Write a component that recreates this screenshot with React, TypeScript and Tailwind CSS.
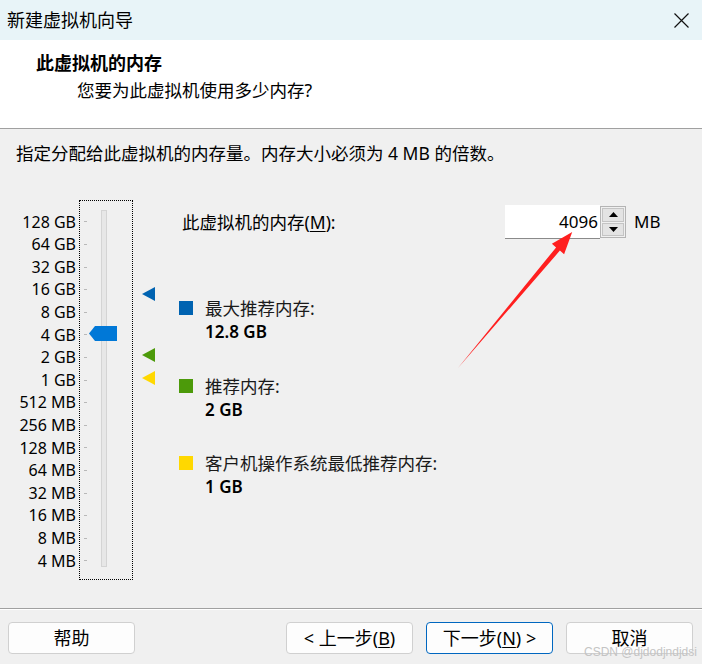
import React from "react";

const SCALE = [
  "128 GB",
  "64 GB",
  "32 GB",
  "16 GB",
  "8 GB",
  "4 GB",
  "2 GB",
  "1 GB",
  "512 MB",
  "256 MB",
  "128 MB",
  "64 MB",
  "32 MB",
  "16 MB",
  "8 MB",
  "4 MB",
];

const MARKERS = [
  { top: "top-[87px]", fill: "#0063b1" },
  { top: "top-[148px]", fill: "#4c9a0a" },
  { top: "top-[171px]", fill: "#ffd800" },
];

const LEGEND = [
  { sq: "bg-[#0063b1]", label: "最大推荐内存:", value: "12.8 GB", mt: "mt-[57px]" },
  { sq: "bg-[#4c9a0a]", label: "推荐内存:", value: "2 GB", mt: "mt-[30px]" },
  { sq: "bg-[#ffd800]", label: "客户机操作系统最低推荐内存:", value: "1 GB", mt: "mt-[29px]" },
];

function Btn({ children, primary }: { children: React.ReactNode; primary?: boolean }) {
  return (
    <div
      className={
        "h-[32px] w-[127px] rounded-[4px] bg-[#fdfdfd] flex items-center justify-center text-[18px] leading-none text-black border " +
        (primary ? "border-[#0067c0]" : "border-[#d0d0d0]")
      }
    >
      {children}
    </div>
  );
}

export default function App() {
  return (
    <div className="relative w-[702px] h-[664px] overflow-hidden bg-[#f0f0f0] flex flex-col font-['Noto_Sans','Noto_Sans_CJK_SC',sans-serif] text-black">
      {/* Title bar */}
      <div className="h-[40px] shrink-0 bg-[#e8f4f8] flex items-center justify-between pl-[7px] pr-[13px]">
        <span className="text-[18px] leading-none">新建虚拟机向导</span>
        <svg width="15" height="15" viewBox="0 0 15 15">
          <path d="M0.5 0.5 L14.5 14.5 M14.5 0.5 L0.5 14.5" stroke="#111" strokeWidth="1.2" />
        </svg>
      </div>

      {/* Header */}
      <div className="h-[89px] shrink-0 bg-white border-b border-[#a0a0a0] pt-[11px]">
        <div className="pl-[36px] text-[18px] leading-[24px] font-bold">此虚拟机的内存</div>
        <div className="pl-[77px] mt-[3px] text-[17.5px] leading-[24px]">您要为此虚拟机使用多少内存?</div>
      </div>

      {/* Content */}
      <div className="flex-1 flex flex-col">
        <div className="pl-[16px] pt-[12px] text-[17.5px] leading-[24px]">
          指定分配给此虚拟机的内存量。内存大小必须为 4 MB 的倍数。
        </div>

        <div className="mt-[35px] flex">
          {/* scale labels */}
          <div className="w-[76px] pt-[10.7px] text-right text-[16px]">
            {SCALE.map((s) => (
              <div key={s} className="h-[22.6px] leading-[22.6px]">
                {s}
              </div>
            ))}
          </div>

          {/* slider */}
          <div className="ml-[3px] w-[54px] h-[380px] border border-dotted border-black relative flex">
            <div className="ml-[4px] pt-[9.7px] w-[3px]">
              {SCALE.map((s) => (
                <div key={s} className="h-[22.6px] flex items-center">
                  <div className="w-[3px] h-px bg-[#b8b8b8]" />
                </div>
              ))}
            </div>
            <div className="ml-[14px] mt-[9px] w-[6px] h-[357px] bg-[#e7e7e7] border border-[#d4d4d4]" />
            <svg className="absolute left-[9px] top-[125px]" width="28" height="15" viewBox="0 0 28 15">
              <polygon points="0,7.5 6,0 28,0 28,15 6,15" fill="#0078d7" />
            </svg>
          </div>

          {/* markers */}
          <div className="relative w-[46px]">
            {MARKERS.map((m) => (
              <svg key={m.fill} className={"absolute left-[9px] " + m.top} width="13" height="14" viewBox="0 0 13 14">
                <polygon points="13,0 0,7 13,14" fill={m.fill} />
              </svg>
            ))}
          </div>

          {/* right panel */}
          <div className="flex-1 flex flex-col">
            <div className="mt-[5px] h-[34px] flex items-center">
              <div className="w-[326px] pl-[3px] text-[17.5px] leading-[24px]">
                此虚拟机的内存(<span className="underline underline-offset-2">M</span>):
              </div>
              <div className="w-[95px] h-[34px] bg-white border-b border-[#8a8a8a] flex items-center justify-end pr-[2px] text-[17px]">
                4096
              </div>
              <div className="w-[26px] h-[32px] border border-[#b4b4b4] bg-[#f0f0f0] flex flex-col p-px gap-px">
                <div className="flex-1 bg-[#e3e3e3] border border-[#c4c4c4] flex items-center justify-center">
                  <svg width="9" height="5" viewBox="0 0 9 5">
                    <polygon points="4.5,0 9,5 0,5" fill="#000" />
                  </svg>
                </div>
                <div className="flex-1 bg-[#e3e3e3] border border-[#c4c4c4] flex items-center justify-center">
                  <svg width="9" height="5" viewBox="0 0 9 5">
                    <polygon points="0,0 9,0 4.5,5" fill="#000" />
                  </svg>
                </div>
              </div>
              <span className="ml-[8px] text-[17px]">MB</span>
            </div>

            {LEGEND.map((l) => (
              <div key={l.label} className={"flex " + l.mt}>
                <div className={"mt-[5px] w-[14px] h-[14px] " + l.sq} />
                <div className="ml-[12px]">
                  <div className="text-[17.5px] leading-[24px] text-[#1a1a1a]">{l.label}</div>
                  <div className="text-[17px] leading-[24px] font-semibold">{l.value}</div>
                </div>
              </div>
            ))}
          </div>
        </div>
      </div>

      {/* Footer */}
      <div className="h-[56px] shrink-0 border-t border-[#a0a0a0]">
        <div className="border-t border-white pt-[12px] pl-[8px] pr-[9px] flex">
          <Btn>帮助</Btn>
          <div className="ml-auto flex gap-[13px]">
            <Btn>
              &lt; 上一步(<span className="underline underline-offset-2">B</span>)
            </Btn>
            <Btn primary>
              下一步(<span className="underline underline-offset-2">N</span>) &gt;
            </Btn>
            <Btn>取消</Btn>
          </div>
        </div>
      </div>

      {/* annotation arrow */}
      <svg className="absolute left-0 top-0 pointer-events-none" width="702" height="664" viewBox="0 0 702 664">
        <polygon
          points="458,368 556.1,247.4 551.9,243.8 572.2,232.1 564.1,254.2 559.9,250.6"
          fill="#ff1f1f"
        />
      </svg>

      {/* watermark */}
      <span className="absolute left-[584px] top-[646px] text-[12px] leading-none text-[#c4c4c4] font-['Liberation_Sans',sans-serif] pointer-events-none">
        CSDN @djdodjndjdsi
      </span>
    </div>
  );
}
